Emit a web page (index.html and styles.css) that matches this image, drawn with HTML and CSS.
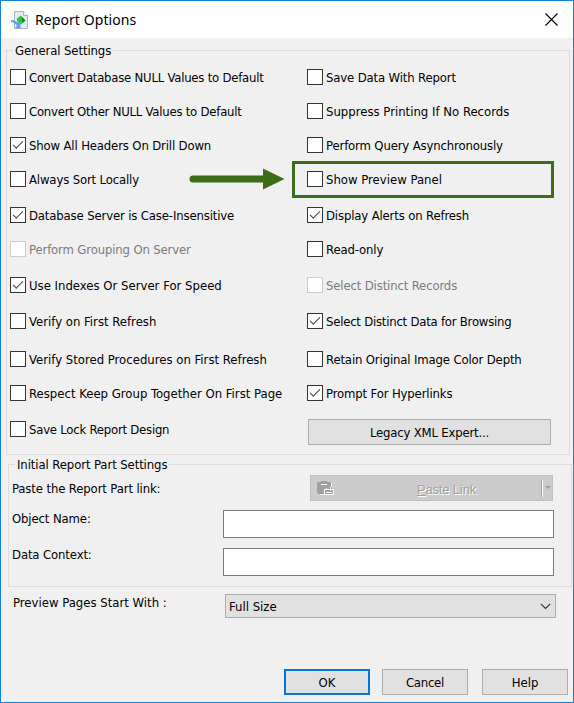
FILE: index.html
```
<!DOCTYPE html>
<html lang="en">
<head>
    <meta charset="UTF-8">
    <meta name="viewport" content="width=device-width, initial-scale=1.0">
    <title>Report Options</title>
    <link rel="stylesheet" href="styles.css">
</head>
<body>
    <div class="dialog">
        <header class="titlebar">
            <svg class="app-icon" width="18" height="20" viewBox="0 0 18 20">
                <path d="M3.5 1.5h9l4 4v13h-13z" fill="#e3ecf4" stroke="#a5b7c6"/>
                <path d="M12.5 1.5v4h4" fill="#fff" stroke="#a5b7c6"/>
                <path d="M5.500 9L9.500 5.500l5 5-4.500 4-3-2z" fill="#35c43a"/>
                <path d="M10.500 6.500l4 4-3 2.500z" fill="#0f8f1e"/>
                <path d="M0 10c3 0 5 1 6.500 2.500L9.500 12v6H4l2-2c-1-2-3-3.500-6-4z" fill="#6b9fe3"/>
            </svg>
            <h1>Report Options</h1>
            <svg class="close" width="13" height="13" viewBox="0 0 13 13">
                <path d="M.5.5l12 12M12.500.5l-12 12" stroke="#000" stroke-width="1.100"/>
            </svg>
        </header>

        <main class="content">
            <section class="group general">
                <h2>General Settings</h2>
                <div class="columns">
                    <div class="options">
                        <label class="option tight"><input type="checkbox"><span>Convert Database NULL Values to Default</span></label>
                        <label class="option tight"><input type="checkbox"><span>Convert Other NULL Values to Default</span></label>
                        <label class="option snug"><input type="checkbox" checked><span>Show All Headers On Drill Down</span></label>
                        <label class="option snug"><input type="checkbox"><span>Always Sort Locally</span></label>
                        <label class="option snug"><input type="checkbox" checked><span>Database Server is Case-Insensitive</span></label>
                        <label class="option snug"><input type="checkbox" disabled><span>Perform Grouping On Server</span></label>
                        <label class="option"><input type="checkbox" checked><span>Use Indexes Or Server For Speed</span></label>
                        <label class="option"><input type="checkbox"><span>Verify on First Refresh</span></label>
                        <label class="option"><input type="checkbox"><span>Verify Stored Procedures on First Refresh</span></label>
                        <label class="option"><input type="checkbox"><span>Respect Keep Group Together On First Page</span></label>
                        <label class="option tight"><input type="checkbox"><span>Save Lock Report Design</span></label>
                    </div>
                    <div class="options">
                        <label class="option snug"><input type="checkbox"><span>Save Data With Report</span></label>
                        <label class="option"><input type="checkbox"><span>Suppress Printing If No Records</span></label>
                        <label class="option snug"><input type="checkbox"><span>Perform Query Asynchronously</span></label>
                        <label class="option highlighted"><input type="checkbox"><span>Show Preview Panel</span>
                            <svg class="arrow" width="96" height="22" viewBox="0 0 96 22">
                                <path d="M4 11h72" stroke="#3e6d1a" stroke-width="7" stroke-linecap="round"/>
                                <path d="M74 .5L95.500 11 74 21.500z" fill="#3e6d1a"/>
                            </svg>
                        </label>
                        <label class="option snug"><input type="checkbox" checked><span>Display Alerts on Refresh</span></label>
                        <label class="option snug"><input type="checkbox"><span>Read-only</span></label>
                        <label class="option snug"><input type="checkbox" disabled><span>Select Distinct Records</span></label>
                        <label class="option tight"><input type="checkbox" checked><span>Select Distinct Data for Browsing</span></label>
                        <label class="option snug"><input type="checkbox"><span>Retain Original Image Color Depth</span></label>
                        <label class="option snug"><input type="checkbox" checked><span>Prompt For Hyperlinks</span></label>
                        <button class="button legacy">Legacy XML Expert...</button>
                    </div>
                </div>
            </section>

            <section class="group parts">
                <h2>Initial Report Part Settings</h2>
                <div class="field paste-row">
                    <span>Paste the Report Part link:</span>
                    <button class="paste" disabled>
                        <svg width="18" height="16" viewBox="0 0 18 16" shape-rendering="crispEdges">
                            <path d="M0 2h4V1h6v1h4v3h1v9H1v-1H0z" fill="#a0a0a0"/>
                            <path d="M4 4.500h6M14.500 3v4M3 14.500h4" stroke="#fff"/>
                            <path d="M7.500 9.500h9v5h-9z" fill="#a0a0a0" stroke="#fff"/>
                            <path d="M9 12.500h6M9.500 8v2M13.500 7v4" stroke="#fff"/>
                        </svg>
                        <span class="paste-text"><u>P</u>aste Link</span>
                        <span class="split"></span>
                    </button>
                </div>
                <div class="field">
                    <label for="objectName">Object Name:</label>
                    <input class="text" type="text" id="objectName">
                </div>
                <div class="field">
                    <label for="dataContext">Data Context:</label>
                    <input class="text" type="text" id="dataContext">
                </div>
            </section>

            <div class="preview">
                <span>Preview Pages Start With :</span>
                <div class="select">
                    <span>Full Size</span>
                    <svg width="11" height="7" viewBox="0 0 11 7">
                        <path d="M.8.8l4.700 4.700L10.200.8" fill="none" stroke="#333" stroke-width="1.200"/>
                    </svg>
                </div>
            </div>

            <footer class="actions">
                <button class="button primary">OK</button>
                <button class="button cancel">Cancel</button>
                <button class="button help">Help</button>
            </footer>
        </main>
    </div>
</body>
</html>
```
FILE: styles.css
```
*, *::before {
    box-sizing: border-box;
}
body {
    margin: 0;
    font-family: "DejaVu Sans Condensed", "DejaVu Sans", sans-serif;
    font-stretch: condensed;
    font-size: 13px;
    line-height: 16px;
    color: #000;
}
.dialog {
    width: 574px;
    height: 703px;
    border: 1px solid #1a80d2;
    background-color: #f0f0f0;
}
.titlebar {
    display: flex;
    align-items: center;
    height: 37px;
    padding: 0 15px 0 10px;
    background-color: #fff;
}
h1 {
    margin: 0 auto 0 6px;
    font-family: "Noto Sans", sans-serif;
    font-stretch: normal;
    font-size: 14px;
    font-weight: normal;
    line-height: 20px;
    letter-spacing: 0.08px;
}
h2 {
    width: max-content;
    margin: 0;
    padding: 0 2px;
    background-color: #f0f0f0;
    font-size: 13px;
    font-weight: normal;
    letter-spacing: -0.1px;
}
.content {
    padding: 12px 1px 0 5px;
}
.group {
    border: 1px solid #dcdcdc;
}
.group h2 {
    margin: -8px 0 0 6px;
}
.general {
    width: 564px;
    height: 405px;
}
.columns {
    display: grid;
    grid-template-columns: 297px 250px;
    padding: 10px 0 0 3px;
}
.options {
    display: grid;
    grid-template-rows: 34px 34px 34px 36px 34px 36px 36px 38px 34px 36px 16px;
}
.option {
    display: flex;
    gap: 3px;
    height: 16px;
    white-space: nowrap;
}
.option span {
    padding-top: 1px;
}
.tight {
    letter-spacing: -0.23px;
}
.snug {
    letter-spacing: -0.15px;
}
.option input {
    appearance: none;
    width: 16px;
    height: 16px;
    margin: 0;
    border: 1px solid #333;
    background-color: #fff;
}
.option input:checked::before {
    content: "";
    display: block;
    width: 10px;
    height: 5px;
    margin: 3px 0 0 2px;
    border: solid #444;
    border-width: 0 0 1.5px 1.5px;
    transform: rotate(-45deg);
}
.option input:disabled {
    border-color: #ccc;
}
.option input:disabled + span {
    color: #7c7c7c;
}
.highlighted {
    position: relative;
}
.highlighted::before {
    content: "";
    position: absolute;
    left: -15px;
    top: -10px;
    width: 262px;
    height: 37px;
    border: 3px solid #3e6d1a;
}
.arrow {
    position: absolute;
    left: -118px;
    top: -3px;
}
.button {
    width: 86px;
    height: 26px;
    padding: 1px 0 0;
    border: 1px solid #adadad;
    background-color: #e1e1e1;
    color: #000;
    font: inherit;
}
.legacy {
    width: 243px;
    margin: -2px 0 0 1px;
    letter-spacing: -0.2px;
}
.parts {
    width: 564px;
    height: 123px;
    margin: 9px 0 0 2px;
}
.field {
    display: flex;
    justify-content: space-between;
    height: 28px;
    margin: 0 17px 10px 3px;
    letter-spacing: -0.13px;
}
.field label {
    padding-top: 1px;
}
.field:last-child label {
    padding-top: 0;
    margin-top: -1px;
}
.paste-row {
    height: 26px;
    margin: 2px 18px 9px 3px;
}
.paste-row > span {
    padding-top: 6px;
}
.paste {
    display: flex;
    align-items: center;
    width: 243px;
    height: 26px;
    padding: 0 1px 0 6px;
    border: 1px solid #bfbfbf;
    background-color: #ccc;
    color: #a0a0a0;
    font: inherit;
    font-family: "Liberation Sans", sans-serif;
    letter-spacing: -0.15px;
    text-shadow: 1px 1px #fff;
}
.paste-text {
    flex: 1;
    padding: 3px 0 0 17px;
}
.split {
    width: 10px;
    height: 17px;
    border-left: 1px solid #a0a0a0;
    box-shadow: inset 1px 0 #fff;
}
.split::before {
    content: "";
    display: block;
    margin: 6px 0 0 3px;
    width: 6px;
    border: 3px solid transparent;
    border-top-color: #a0a0a0;
}
.text {
    width: 331px;
    height: 28px;
    border: 1px solid #7a7a7a;
    background-color: #fff;
}
.preview {
    display: flex;
    justify-content: space-between;
    margin: 7px 16px 0 7px;
}
.preview > span {
    padding-top: 1px;
}
.select {
    display: flex;
    align-items: center;
    justify-content: space-between;
    width: 331px;
    height: 24px;
    padding: 1px 4px 0 3px;
    border: 1px solid #adadad;
    background-color: #e1e1e1;
}
.actions {
    display: flex;
    justify-content: flex-end;
    margin: 51px 4px 0 0;
}
.primary {
    border: 2px solid #0078d7;
}
.cancel {
    margin-left: 12px;
    letter-spacing: -0.25px;
}
.help {
    margin-left: 14px;
}
```
